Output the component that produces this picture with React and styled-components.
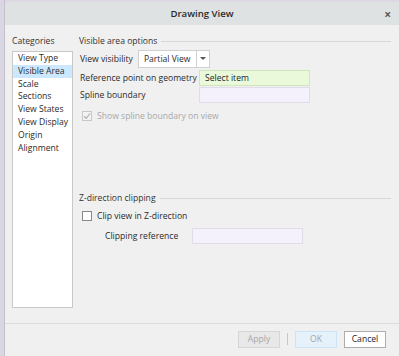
import React from "react";
import styled, { createGlobalStyle } from "styled-components";

const Global = createGlobalStyle`
  html, body { margin: 0; padding: 0; background: #dcd8e4; }
  body { font-family: "Open Sans", "Noto Sans", sans-serif; font-size: 8.6px; color: #1e1e1e; }
  * { box-sizing: border-box; }
`;

const Page = styled.div`
  display: flex;
  width: 399px;
  height: 356px;
  overflow: hidden;
`;

const Strip = styled.div`
  width: 5px;
  flex: none;
  background: #dad6e3;
  border-right: 1px solid #c4c0cc;
`;

const Dialog = styled.div`
  flex: 1;
  margin-top: 2px;
  display: flex;
  flex-direction: column;
  background: #f0f0f0;
  border-top-left-radius: 5px;
  overflow: hidden;
`;

const TitleBar = styled.div`
  height: 23px;
  flex: none;
  position: relative;
  display: flex;
  align-items: center;
  justify-content: center;
  background: #dfe2e2;
  font-size: 9.6px;
  font-weight: 600;
  color: #2a2a2a;
`;

const Close = styled.span`
  position: absolute;
  right: 8px;
  top: 4px;
  font-size: 12px;
  font-weight: 700;
  color: #5a5a5a;
`;

const Main = styled.div`
  flex: 1;
  display: flex;
  padding: 9px 8px 0 7px;
`;

const Categories = styled.div`
  width: 61px;
  flex: none;
  display: flex;
  flex-direction: column;
`;

const GroupLabel = styled.div`
  height: 14px;
  line-height: 14px;
  color: #333;
  white-space: nowrap;
`;

const List = styled.ul`
  margin: 3px 0 0;
  padding: 0;
  list-style: none;
  height: 257px;
  background: #fff;
  border: 1px solid #c9c9c9;
`;

const Item = styled.li`
  height: 12.8px;
  line-height: 12.8px;
  padding-left: 5px;
  white-space: nowrap;
  color: #2a2a2a;
  background: ${(p) => (p.$selected ? "#cce8ff" : "transparent")};
`;

const Content = styled.div`
  flex: 1;
  margin-left: 6px;
  display: flex;
  flex-direction: column;
`;

const Section = styled.div`
  margin-top: ${(p) => p.$top || 0}px;
`;

const Header = styled.div`
  display: flex;
  align-items: center;
  height: 14px;
  color: #333;
  white-space: nowrap;
  &::after {
    content: "";
    flex: 1;
    height: 1px;
    background: #d7d7d7;
    margin-left: 4px;
  }
`;

const Row = styled.div`
  display: flex;
  align-items: center;
  height: ${(p) => p.$h || 18}px;
  padding-left: ${(p) => p.$indent || 1}px;
  white-space: nowrap;
  color: ${(p) => (p.$disabled ? "#a8a8a8" : "#2a2a2a")};
`;

const Label = styled.span`
  width: ${(p) => (p.$w ? `${p.$w}px` : "auto")};
  flex: none;
`;

const Select = styled.div`
  display: flex;
  height: 18px;
  margin-left: 5px;
  border: 1px solid #d0d0d0;
  background: #fff;
`;

const SelectValue = styled.span`
  padding: 0 5px;
  line-height: 16px;
  border-right: 1px solid #d0d0d0;
`;

const SelectArrow = styled.span`
  width: 12px;
  display: flex;
  align-items: center;
  justify-content: center;
  &::before {
    content: "";
    border-left: 3px solid transparent;
    border-right: 3px solid transparent;
    border-top: 3px solid #555;
  }
`;

const Input = styled.div`
  width: 111px;
  height: 16px;
  line-height: 14px;
  padding-left: 5px;
  border: 1px solid ${(p) => (p.$green ? "#cfe6bb" : "#e0dcec")};
  background: ${(p) => (p.$green ? "#eaf9da" : "#f4f1fc")};
  color: #1e1e1e;
`;

const Check = styled.span`
  width: 10px;
  height: 10px;
  margin-right: 5px;
  flex: none;
  border: 1px solid ${(p) => (p.$disabled ? "#c8c8c8" : "#888")};
  background: ${(p) => (p.$disabled ? "#f3f3f3" : "#fff")};
  display: flex;
  align-items: center;
  justify-content: center;
`;

const Footer = styled.div`
  height: 33px;
  flex: none;
  border-top: 1px solid #dcdcdc;
  display: flex;
  align-items: flex-start;
  justify-content: flex-end;
  padding: 7px 13px 0 0;
  gap: 7px;
`;

const Button = styled.div`
  width: 42px;
  height: 17px;
  line-height: 15px;
  text-align: center;
  border: 1px solid ${(p) => (p.$variant === "ok" ? "#cce4f7" : p.$variant === "disabled" ? "#d6d6d6" : "#adadad")};
  background: ${(p) => (p.$variant === "ok" ? "#e5f1fb" : p.$variant === "disabled" ? "#e8e8e8" : "#fff")};
  color: ${(p) => (p.$variant === "cancel" ? "#1e1e1e" : "#a6a6a6")};
`;

const Divider = styled.span`
  width: 1px;
  height: 12px;
  margin-top: 2px;
  background: #c8c8c8;
`;

const categories = [
  "View Type",
  "Visible Area",
  "Scale",
  "Sections",
  "View States",
  "View Display",
  "Origin",
  "Alignment",
];

export default function App() {
  return (
    <>
      <Global />
      <Page>
        <Strip />
        <Dialog>
          <TitleBar>
            Drawing View
            <Close>×</Close>
          </TitleBar>
          <Main>
            <Categories>
              <GroupLabel>Categories</GroupLabel>
              <List>
                {categories.map((c) => (
                  <Item key={c} $selected={c === "Visible Area"}>
                    {c}
                  </Item>
                ))}
              </List>
            </Categories>
            <Content>
              <Section>
                <Header>Visible area options</Header>
                <Row $h={21}>
                  <Label>View visibility</Label>
                  <Select>
                    <SelectValue>Partial View</SelectValue>
                    <SelectArrow />
                  </Select>
                </Row>
                <Row $h={18}>
                  <Label $w={119}>Reference point on geometry</Label>
                  <Input $green>Select item</Input>
                </Row>
                <Row $h={16}>
                  <Label $w={119}>Spline boundary</Label>
                  <Input />
                </Row>
                <Row $h={26} $indent={3} $disabled>
                  <Check $disabled>
                    <svg width="8" height="8" viewBox="0 0 8 8">
                      <path d="M1 4.2 L3.2 6.3 L7 1.5" fill="none" stroke="#b0b0b0" strokeWidth="1.2" />
                    </svg>
                  </Check>
                  Show spline boundary on view
                </Row>
              </Section>
              <Section $top={62}>
                <Header>Z-direction clipping</Header>
                <Row $h={21} $indent={3}>
                  <Check />
                  Clip view in Z-direction
                </Row>
                <Row $h={20} $indent={26}>
                  <Label $w={87}>Clipping reference</Label>
                  <Input />
                </Row>
              </Section>
            </Content>
          </Main>
          <Footer>
            <Button $variant="disabled">Apply</Button>
            <Divider />
            <Button $variant="ok">OK</Button>
            <Button $variant="cancel">Cancel</Button>
          </Footer>
        </Dialog>
      </Page>
    </>
  );
}
